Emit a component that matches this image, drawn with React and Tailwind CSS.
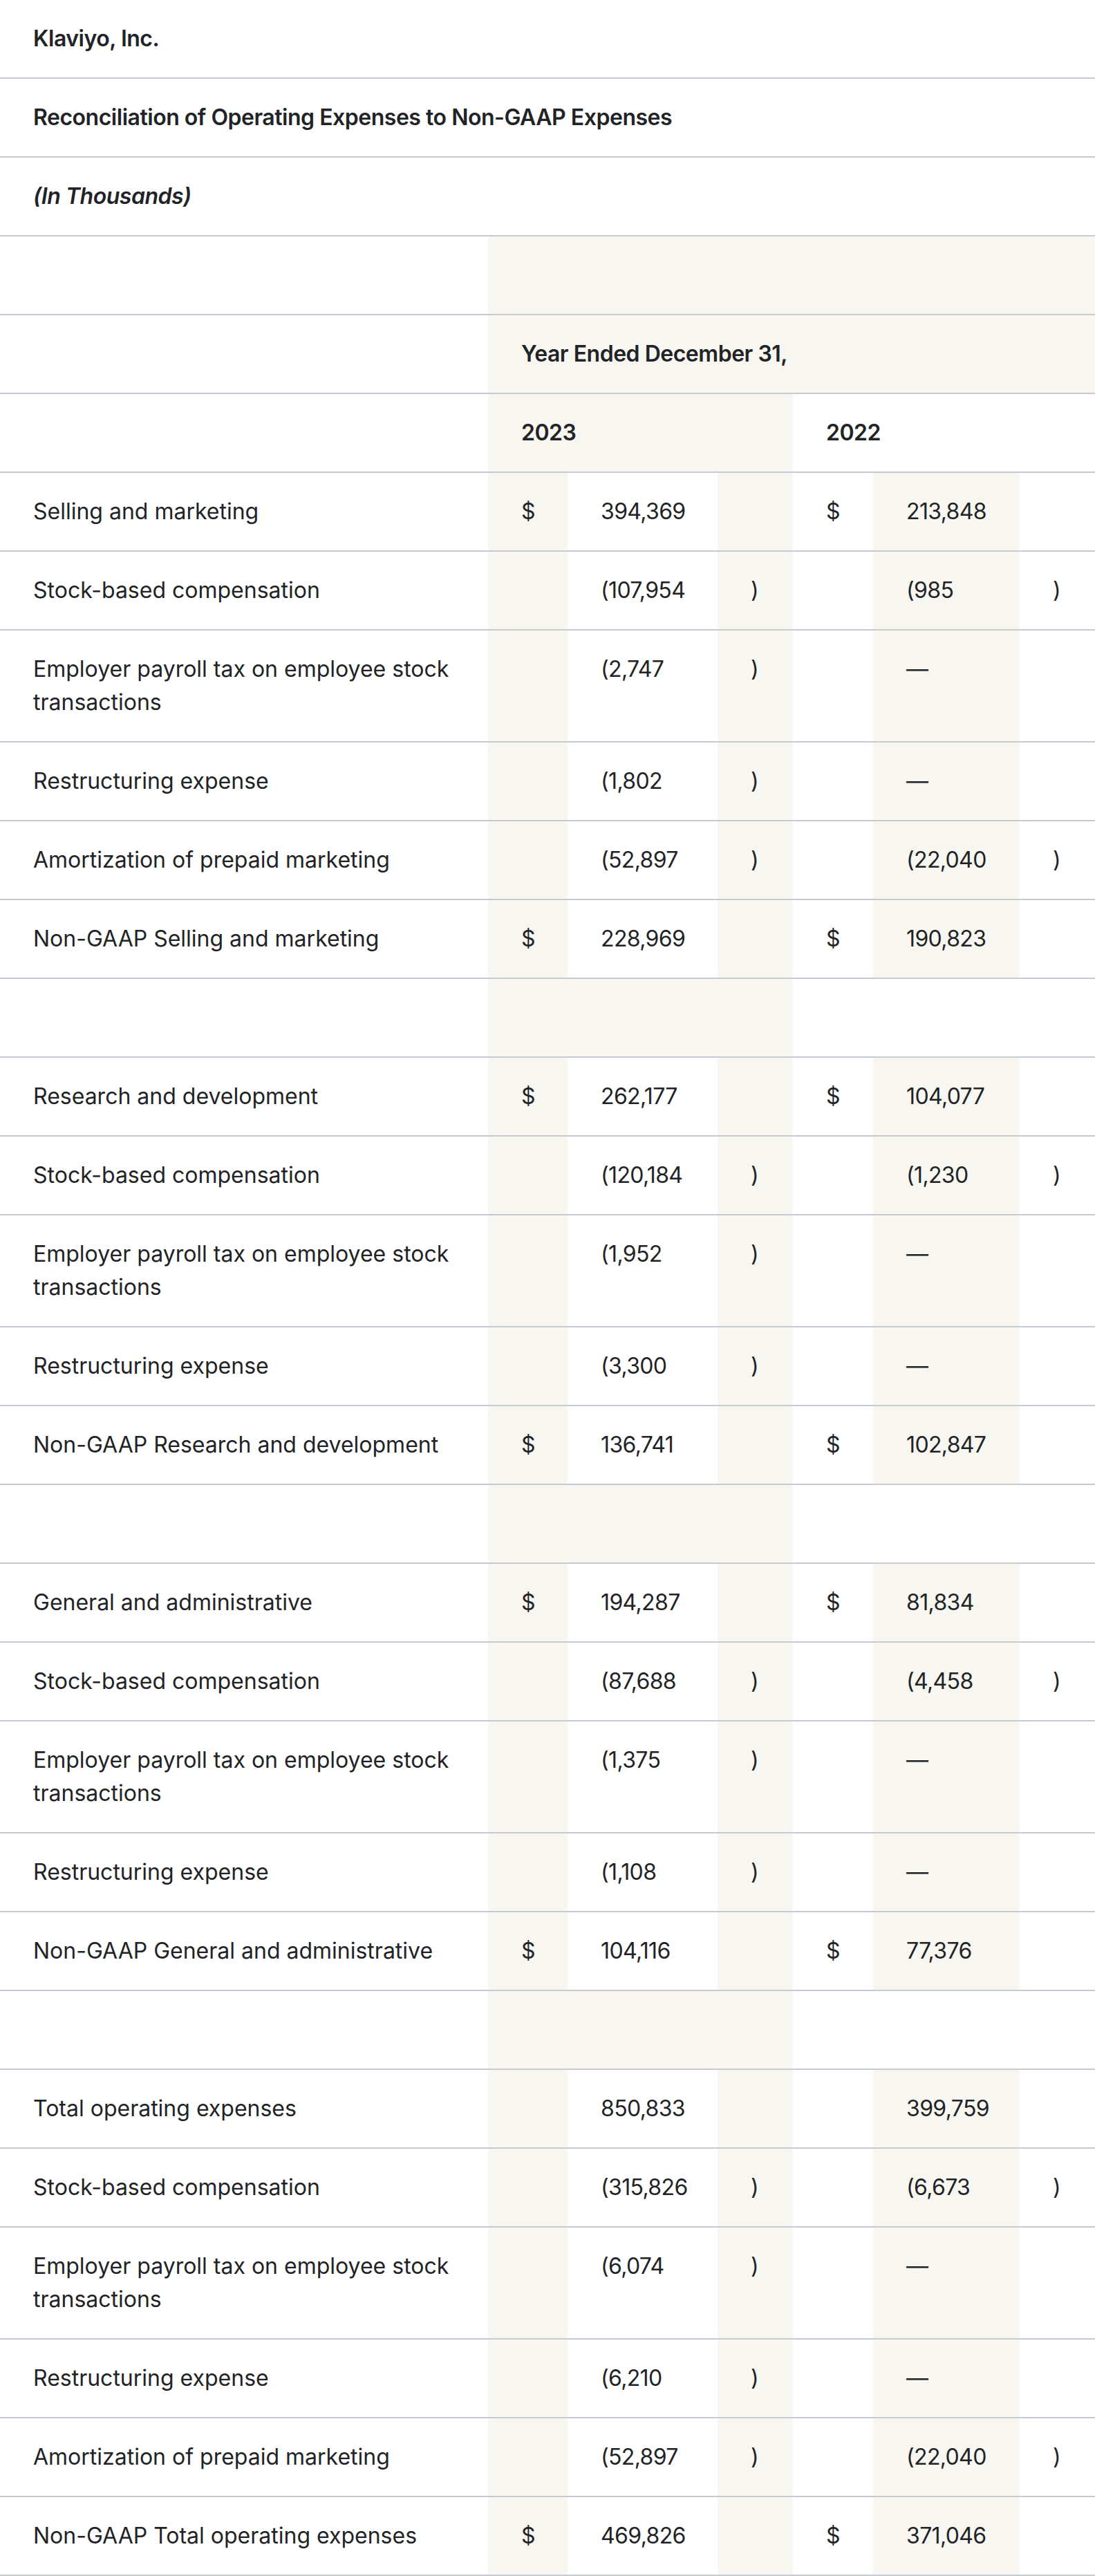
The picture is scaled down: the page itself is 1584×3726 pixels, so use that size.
import React from "react";

const SHADE = "bg-[#f8f6f0]";
const cell = "px-12 py-8 align-top border-b-2 border-[#c5c9d1]";
const head = "font-semibold tracking-[-0.015em]";

const sections = [
  [
    { label: "Selling and marketing", d1: "$", v1: "394,369", p1: "", d2: "$", v2: "213,848", p2: "" },
    { label: "Stock-based compensation", v1: "(107,954", p1: ")", v2: "(985", p2: ")" },
    { label: "Employer payroll tax on employee stock transactions", v1: "(2,747", p1: ")", v2: "—" },
    { label: "Restructuring expense", v1: "(1,802", p1: ")", v2: "—" },
    { label: "Amortization of prepaid marketing", v1: "(52,897", p1: ")", v2: "(22,040", p2: ")" },
    { label: "Non-GAAP Selling and marketing", d1: "$", v1: "228,969", d2: "$", v2: "190,823" },
  ],
  [
    { label: "Research and development", d1: "$", v1: "262,177", d2: "$", v2: "104,077" },
    { label: "Stock-based compensation", v1: "(120,184", p1: ")", v2: "(1,230", p2: ")" },
    { label: "Employer payroll tax on employee stock transactions", v1: "(1,952", p1: ")", v2: "—" },
    { label: "Restructuring expense", v1: "(3,300", p1: ")", v2: "—" },
    { label: "Non-GAAP Research and development", d1: "$", v1: "136,741", d2: "$", v2: "102,847" },
  ],
  [
    { label: "General and administrative", d1: "$", v1: "194,287", d2: "$", v2: "81,834" },
    { label: "Stock-based compensation", v1: "(87,688", p1: ")", v2: "(4,458", p2: ")" },
    { label: "Employer payroll tax on employee stock transactions", v1: "(1,375", p1: ")", v2: "—" },
    { label: "Restructuring expense", v1: "(1,108", p1: ")", v2: "—" },
    { label: "Non-GAAP General and administrative", d1: "$", v1: "104,116", d2: "$", v2: "77,376" },
  ],
  [
    { label: "Total operating expenses", v1: "850,833", v2: "399,759" },
    { label: "Stock-based compensation", v1: "(315,826", p1: ")", v2: "(6,673", p2: ")" },
    { label: "Employer payroll tax on employee stock transactions", v1: "(6,074", p1: ")", v2: "—" },
    { label: "Restructuring expense", v1: "(6,210", p1: ")", v2: "—" },
    { label: "Amortization of prepaid marketing", v1: "(52,897", p1: ")", v2: "(22,040", p2: ")" },
    { label: "Non-GAAP Total operating expenses", d1: "$", v1: "469,826", d2: "$", v2: "371,046" },
  ],
];

const DataRow = ({ r }) => (
  <tr>
    <td className={cell}>{r.label}</td>
    <td className={`${cell} ${SHADE}`}>{r.d1}</td>
    <td className={`${cell} tracking-[-0.02em]`}>{r.v1}</td>
    <td className={`${cell} ${SHADE}`}>{r.p1}</td>
    <td className={cell}>{r.d2}</td>
    <td className={`${cell} ${SHADE} tracking-[-0.02em]`}>{r.v2}</td>
    <td className={cell}>{r.p2}</td>
  </tr>
);

const SpacerRow = () => (
  <tr>
    <td className={cell}>&nbsp;</td>
    <td colSpan={3} className={`${cell} ${SHADE}`}>&nbsp;</td>
    <td colSpan={3} className={cell}>&nbsp;</td>
  </tr>
);

export default function App() {
  return (
    <div className="w-[1584px] bg-white text-[#222326] font-['Inter',sans-serif] text-[32px] leading-[48px]">
      <table className="w-full table-fixed border-collapse">
        <colgroup>
          <col className="w-[706px]" />
          <col className="w-[115px]" />
          <col className="w-[217px]" />
          <col className="w-[109px]" />
          <col className="w-[116px]" />
          <col className="w-[212px]" />
          <col className="w-[109px]" />
        </colgroup>
        <tbody>
          <tr>
            <td colSpan={7} className={`${cell} ${head}`}>Klaviyo, Inc.</td>
          </tr>
          <tr>
            <td colSpan={7} className={`${cell} ${head}`}>
              Reconciliation of Operating Expenses to Non-GAAP Expenses
            </td>
          </tr>
          <tr>
            <td colSpan={7} className={`${cell} ${head} italic`}>(In Thousands)</td>
          </tr>
          <tr>
            <td className={cell}>&nbsp;</td>
            <td colSpan={6} className={`${cell} ${SHADE}`}>&nbsp;</td>
          </tr>
          <tr>
            <td className={cell}>&nbsp;</td>
            <td colSpan={6} className={`${cell} ${SHADE} ${head}`}>Year Ended December 31,</td>
          </tr>
          <tr>
            <td className={cell}>&nbsp;</td>
            <td colSpan={3} className={`${cell} ${SHADE} ${head}`}>2023</td>
            <td colSpan={3} className={`${cell} ${head}`}>2022</td>
          </tr>
          {sections.map((rows, i) => (
            <React.Fragment key={i}>
              {i > 0 && <SpacerRow />}
              {rows.map((r, j) => (
                <DataRow key={j} r={r} />
              ))}
            </React.Fragment>
          ))}
        </tbody>
      </table>
    </div>
  );
}
